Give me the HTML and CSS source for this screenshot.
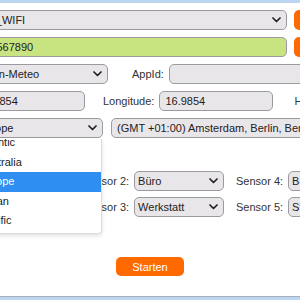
FILE: index.html
```html
<!DOCTYPE html>
<html lang="de">
<head>
    <meta charset="UTF-8">
    <meta name="viewport" content="width=device-width, initial-scale=1.0">
    <title>Wetterstation Setup</title>
    <link rel="stylesheet" href="styles.css">
</head>
<body>
    <div class="page">
        <!-- WLAN -->
        <div class="row">
            <label class="lbl">SSID:</label>
            <span class="sel">
                <select class="field w-ssid">
                    <option>Mein_WIFI</option>
                </select>
                <svg class="chev" width="9" height="6" viewBox="0 0 9 6"><polyline points="1,1 4.5,4.5 8,1"/></svg>
            </span>
            <button class="btn side">Scan</button>
        </div>
        <div class="row">
            <label class="lbl">Passwort:</label>
            <input class="field w-ssid pass" type="text" value="1234567890">
            <button class="btn side">Zeigen</button>
        </div>

        <!-- Wetterdienst -->
        <div class="row">
            <label class="lbl">Dienst:</label>
            <span class="sel">
                <select class="field w-provider">
                    <option>Open-Meteo</option>
                </select>
                <svg class="chev" width="9" height="6" viewBox="0 0 9 6"><polyline points="1,1 4.5,4.5 8,1"/></svg>
            </span>
            <label class="lbl-in gap-appid">AppId:</label>
            <input class="field w-appid" type="text" value="">
        </div>

        <!-- Standort -->
        <div class="row">
            <label class="lbl">Breite:</label>
            <input class="field w-lat" type="text" value="48.3854">
            <label class="lbl-in gap-lon">Longitude:</label>
            <input class="field w-lon" type="text" value="16.9854">
            <label class="lbl-in gap-alt">Höhe:</label>
            <input class="field w-alt" type="text" value="160">
        </div>

        <!-- Zeitzone, Auswahlliste ist offen -->
        <div class="row">
            <label class="lbl">Zone:</label>
            <span class="sel">
                <select class="field w-region">
                    <option>Europe</option>
                </select>
                <svg class="chev" width="9" height="6" viewBox="0 0 9 6"><polyline points="1,1 4.5,4.5 8,1"/></svg>
                <div class="popup">
                    <ul>
                        <li>Africa</li>
                        <li>America</li>
                        <li>Antarctica</li>
                        <li>Arctic</li>
                        <li>Asia</li>
                        <li>Atlantic</li>
                        <li>Australia</li>
                        <li class="active">Europe</li>
                        <li>Indian</li>
                        <li>Pacific</li>
                    </ul>
                </div>
            </span>
            <span class="sel gap-tz">
                <select class="field w-tz">
                    <option>(GMT +01:00) Amsterdam, Berlin, Bern, Rom, Stockholm, Wien</option>
                </select>
            </span>
        </div>

        <div class="row">
            <label class="lbl">Sensoren</label>
        </div>

        <!-- Sensoren -->
        <div class="sensors">
            <div class="cell">
                <label class="lbl-in">Sensor 0:</label>
                <span class="sel"><select class="field w-sensor"><option>Außen</option></select><svg class="chev" width="9" height="6" viewBox="0 0 9 6"><polyline points="1,1 4.5,4.5 8,1"/></svg></span>
            </div>
            <div class="cell">
                <label class="lbl-in">Sensor 2:</label>
                <span class="sel"><select class="field w-sensor"><option>Büro</option></select><svg class="chev" width="9" height="6" viewBox="0 0 9 6"><polyline points="1,1 4.5,4.5 8,1"/></svg></span>
            </div>
            <div class="cell">
                <label class="lbl-in">Sensor 4:</label>
                <span class="sel"><select class="field w-sensor"><option>Bad</option></select><svg class="chev" width="9" height="6" viewBox="0 0 9 6"><polyline points="1,1 4.5,4.5 8,1"/></svg></span>
            </div>
            <div class="cell">
                <label class="lbl-in">Sensor 1:</label>
                <span class="sel"><select class="field w-sensor"><option>Keller</option></select><svg class="chev" width="9" height="6" viewBox="0 0 9 6"><polyline points="1,1 4.5,4.5 8,1"/></svg></span>
            </div>
            <div class="cell">
                <label class="lbl-in">Sensor 3:</label>
                <span class="sel"><select class="field w-sensor"><option>Werkstatt</option></select><svg class="chev" width="9" height="6" viewBox="0 0 9 6"><polyline points="1,1 4.5,4.5 8,1"/></svg></span>
            </div>
            <div class="cell">
                <label class="lbl-in">Sensor 5:</label>
                <span class="sel"><select class="field w-sensor"><option>Stube</option></select><svg class="chev" width="9" height="6" viewBox="0 0 9 6"><polyline points="1,1 4.5,4.5 8,1"/></svg></span>
            </div>
        </div>

        <div class="actions">
            <button class="btn start">Starten</button>
        </div>
    </div>
</body>
</html>
```

FILE: styles.css
```css
html, body {
    overflow: hidden;
}
body {
    margin: 0;
    background: #bcd5f1;
    font-family: "Liberation Sans", Arial, sans-serif;
    font-size: 11px;
    color: #222;
}
.page {
    margin: 3px -72px 0;
    height: 294px;
    box-sizing: border-box;
    padding-top: 7px;
    background: #fff;
    border-bottom: 1px solid #a7b0bb;
}
.row {
    display: flex;
    align-items: center;
    height: 20px;
    margin-bottom: 7px;
}
.lbl {
    width: 40px;
    margin-right: 4px;
    flex: none;
    overflow: hidden;
    white-space: nowrap;
}
.lbl-in {
    color: #333;
    white-space: nowrap;
    margin-right: 5px;
}
.field {
    height: 20px;
    box-sizing: border-box;
    padding: 0 5px;
    border: 1px solid #9c9aa0;
    border-radius: 5px;
    background: #e9e6ea;
    font: inherit;
    color: #222;
    -webkit-appearance: none;
    appearance: none;
    outline: none;
}
.sel {
    position: relative;
    display: inline-flex;
    flex: none;
}
.chev {
    position: absolute;
    right: 6px;
    top: 50%;
    margin-top: -3px;
    fill: none;
    stroke: #222;
    stroke-width: 1.7;
    stroke-linecap: round;
    stroke-linejoin: round;
    pointer-events: none;
}
/* SSID und Passwort beginnen etwas weiter links */
.w-ssid {
    width: 321px;
    margin-left: -6px;
}
.pass { background: #c8e480; }
.w-provider { width: 136px; }
.w-appid { width: 170px; }
.w-lat { width: 113px; }
.w-lon { width: 114px; }
.w-alt { width: 60px; }
.w-region { width: 131px; }
.w-tz { width: 220px; }
.w-sensor {
    width: 90px;
    padding-left: 3px;
}

.gap-appid { margin-left: 24px; }
.gap-lon { margin-left: 18px; }
.gap-alt { margin-left: 21px; }
.gap-tz { margin-left: 8px; }

.btn {
    border: none;
    border-radius: 5px;
    background: #ff6a00;
    color: #fff;
    font: inherit;
    cursor: pointer;
}
.side {
    height: 20px;
    margin-left: 7px;
    padding: 0 8px;
}

/* offene Liste der Regionen */
.popup {
    position: absolute;
    top: 21px;
    left: 0;
    width: 130px;
    height: 95px;
    box-sizing: border-box;
    overflow: hidden;
    background: #fff;
    border: 1px solid #dcdcdc;
    border-top: none;
    border-radius: 0 0 4px 4px;
    box-shadow: 0 2px 4px rgba(0, 0, 0, 0.12);
    z-index: 5;
}
.popup ul {
    list-style: none;
    margin: -103.5px 0 0;
    padding: 0;
}
.popup li {
    height: 19.5px;
    line-height: 19.5px;
    padding-left: 6px;
    color: #222;
}
.popup li.active {
    background: #2e8ef2;
    color: #fff;
}

.sensors {
    display: grid;
    grid-template-columns: repeat(3, 141px);
    column-gap: 13px;
    row-gap: 6px;
    margin-top: -1px;
}
.cell {
    display: flex;
    align-items: center;
    justify-content: space-between;
}
.actions {
    display: flex;
    justify-content: center;
    margin-top: 40px;
}
.start {
    width: 68px;
    height: 19px;
    padding: 0;
}
```
